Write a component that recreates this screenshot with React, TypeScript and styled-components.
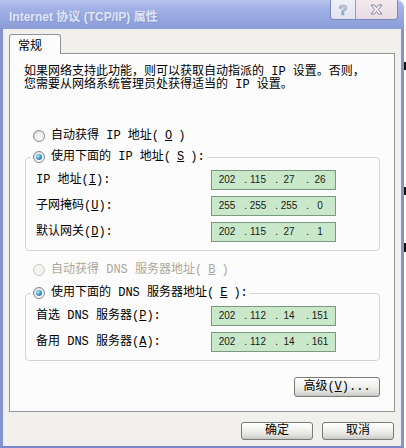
import React from "react";
import styled, { createGlobalStyle, css } from "styled-components";

const GlobalStyle = createGlobalStyle`
  html, body { margin: 0; padding: 0; background: #ffffff; }
  body {
    font-family: "Liberation Mono", "Noto Sans CJK SC", monospace;
    font-size: 12px;
    color: #000000;
  }
  #root { width: 406px; height: 448px; }
`;

const Page = styled.div`
  display: flex;
  width: 406px;
  height: 448px;
  overflow: hidden;
  background: #ffffff;
`;

const Window = styled.div`
  width: 404px;
  height: 448px;
  flex: none;
  display: flex;
  flex-direction: column;
`;

const TitleBar = styled.div`
  height: 29px;
  flex: none;
  display: flex;
  align-items: flex-start;
  justify-content: space-between;
  background: linear-gradient(180deg, #b9c5ee 0%, #a4b3e6 25%, #97a7df 60%, #8b9cd7 100%);
  border-top-right-radius: 7px;
`;

const Title = styled.div`
  padding: 10px 0 0 9px;
  font-family: "Liberation Sans", "Noto Sans CJK SC", sans-serif;
  font-weight: bold;
  font-size: 12px;
  line-height: 14px;
  color: #dfe4f6;
  text-shadow: 1px 1px 0 #8a98cc;
  white-space: nowrap;
`;

const CaptionButtons = styled.div`
  display: flex;
  height: 19px;
  margin-right: 6px;
  border: 1px solid #7c88ba;
  border-top: none;
  border-radius: 0 0 4px 4px;
  overflow: hidden;
`;

const CaptionButton = styled.div<{ $tone: "help" | "close" }>`
  width: ${(p) => (p.$tone === "close" ? 41 : 24)}px;
  display: flex;
  align-items: center;
  justify-content: center;
  background: ${(p) =>
    p.$tone === "close"
      ? "linear-gradient(180deg, #f3e9ee 0%, #e9dbe4 100%)"
      : "linear-gradient(180deg, #f0f1f8 0%, #e0e3ef 100%)"};
  & + & {
    border-left: 1px solid #939bc2;
  }
`;

const HelpGlyph = styled.span`
  font-family: "Liberation Sans", sans-serif;
  font-weight: bold;
  font-size: 14px;
  line-height: 14px;
  color: #f7f7fb;
  -webkit-text-stroke: 0.7px #7c8096;
`;

const Frame = styled.div`
  flex: 1;
  display: flex;
  flex-direction: column;
  border-left: 3px solid #8494d2;
  border-right: 3px solid #8494d2;
  border-bottom: 2px solid #7888ca;
  background: #f1f0ec;
  padding: 5px 6px 6px 6px;
`;

const TabStrip = styled.div`
  display: flex;
`;

const Tab = styled.div`
  position: relative;
  z-index: 1;
  width: 52px;
  height: 20px;
  margin-bottom: -1px;
  padding: 4px 0 0 8px;
  box-sizing: border-box;
  border: 1px solid #8e9698;
  border-bottom: none;
  border-radius: 3px 3px 0 0;
  background: #fcfcfd;
  line-height: 12px;
  font-family: "Noto Sans CJK SC", sans-serif;
`;

const Panel = styled.div`
  height: 359px;
  box-sizing: border-box;
  border: 1px solid #8e9698;
  background: #fcfcfd;
  display: flex;
  flex-direction: column;
`;

const Intro = styled.p`
  margin: 12px 0 0 14px;
  line-height: 13px;
  white-space: nowrap;
`;

const OptionLine = styled.div<{ $top: number }>`
  margin: ${(p) => p.$top}px 0 0 23px;
`;

const Option = styled.label<{ $disabled?: boolean }>`
  display: flex;
  align-items: center;
  gap: 6px;
  height: 14px;
  line-height: 14px;
  white-space: nowrap;
  color: ${(p) => (p.$disabled ? "#aca899" : "#000000")};
`;

const RadioDot = styled.span<{ $checked?: boolean; $disabled?: boolean }>`
  width: 12px;
  height: 12px;
  box-sizing: border-box;
  flex: none;
  border-radius: 50%;
  display: flex;
  align-items: center;
  justify-content: center;
  border: 1px solid ${(p) => (p.$disabled ? "#cbc9bd" : "#7f8b97")};
  background: ${(p) =>
    p.$disabled
      ? "#f4f4f0"
      : "radial-gradient(circle at 65% 70%, #ffffff 0%, #f3f3ef 40%, #d2d2ca 100%)"};
  ${(p) =>
    p.$checked &&
    css`
      &::after {
        content: "";
        width: 6px;
        height: 6px;
        border-radius: 50%;
        background: radial-gradient(circle at 35% 35%, #b4ecfb 0%, #43a0d8 45%, #1b4d8a 100%);
      }
    `}
`;

const Group = styled.fieldset<{ $top: number }>`
  margin: ${(p) => p.$top}px 14px 0 15px;
  padding: 6px 0 8px 10px;
  min-width: 0;
  border: 1px solid #d5d5cb;
  border-radius: 4px;
`;

const Legend = styled.legend`
  padding: 0 2px;
  margin-left: -5px;
  background: #fcfcfd;
`;

const Fields = styled.div`
  display: grid;
  grid-template-columns: 175px 125px;
  row-gap: 6px;
  align-items: center;
`;

const FieldLabel = styled.span`
  line-height: 14px;
  white-space: nowrap;
`;

const IpBox = styled.div`
  width: 125px;
  height: 20px;
  box-sizing: border-box;
  display: flex;
  align-items: center;
  padding-left: 4px;
  border: 1px solid #7b9881;
  background: #c9e8c9;
  font-family: "Liberation Sans", Arial, sans-serif;
  font-size: 10px;
  line-height: 12px;
  color: #1a1a1a;
`;

const Octet = styled.span`
  width: 22px;
  text-align: center;
`;

const Dot = styled.span`
  width: 9px;
  text-align: right;
`;

const ButtonRow = styled.div<{ $top: number; $right: number }>`
  display: flex;
  justify-content: flex-end;
  gap: 9px;
  margin: ${(p) => p.$top}px ${(p) => p.$right}px 0 0;
`;

const Button = styled.button<{ $w: number; $h: number }>`
  width: ${(p) => p.$w}px;
  height: ${(p) => p.$h}px;
  padding: 0;
  box-sizing: border-box;
  border: 1px solid #7a7a78;
  border-radius: 3px;
  background: linear-gradient(180deg, #ffffff 0%, #f4f4f2 35%, #e2e2de 75%, #c6c6c2 100%);
  font-family: "Liberation Mono", "Noto Sans CJK SC", monospace;
  font-size: 12px;
  line-height: 12px;
  color: #000000;
  display: flex;
  align-items: center;
  justify-content: center;
  white-space: nowrap;
`;

const Outside = styled.div`
  width: 2px;
  flex: none;
  display: flex;
  flex-direction: column;
`;

const Mark = styled.span<{ $top: number; $h: number }>`
  margin-top: ${(p) => p.$top}px;
  height: ${(p) => p.$h}px;
  width: 2px;
  background: #111111;
`;

const CloseIcon = () => (
  <svg width="13" height="11" viewBox="0 0 13 11">
    <path
      d="M1 1 H4.5 L6.5 3.6 L8.5 1 H12 L8.3 5.5 L12 10 H8.5 L6.5 7.4 L4.5 10 H1 L4.7 5.5 Z"
      fill="#f7f2f5"
      stroke="#84849a"
      strokeWidth="1"
      strokeLinejoin="round"
    />
  </svg>
);

const Ip = ({ value }: { value: string }) => {
  const parts = value.split(".");
  return (
    <IpBox>
      {parts.map((p, i) => (
        <React.Fragment key={i}>
          {i > 0 && <Dot>.</Dot>}
          <Octet>{p}</Octet>
        </React.Fragment>
      ))}
    </IpBox>
  );
};

export default function App() {
  return (
    <Page>
      <GlobalStyle />
      <Window>
        <TitleBar>
          <Title>Internet 协议 (TCP/IP) 属性</Title>
          <CaptionButtons>
            <CaptionButton $tone="help">
              <HelpGlyph>?</HelpGlyph>
            </CaptionButton>
            <CaptionButton $tone="close">
              <CloseIcon />
            </CaptionButton>
          </CaptionButtons>
        </TitleBar>
        <Frame>
          <TabStrip>
            <Tab>常规</Tab>
          </TabStrip>
          <Panel>
            <Intro>
              如果网络支持此功能，则可以获取自动指派的 IP 设置。否则，
              <br />
              您需要从网络系统管理员处获得适当的 IP 设置。
            </Intro>

            <OptionLine $top={37}>
              <Option>
                <RadioDot />
                自动获得 IP 地址(<u>O</u>)
              </Option>
            </OptionLine>

            <Group $top={7}>
              <Legend>
                <Option>
                  <RadioDot $checked />
                  使用下面的 IP 地址(<u>S</u>):
                </Option>
              </Legend>
              <Fields>
                <FieldLabel>
                  IP 地址(<u>I</u>):
                </FieldLabel>
                <Ip value="202.115.27.26" />
                <FieldLabel>
                  子网掩码(<u>U</u>):
                </FieldLabel>
                <Ip value="255.255.255.0" />
                <FieldLabel>
                  默认网关(<u>D</u>):
                </FieldLabel>
                <Ip value="202.115.27.1" />
              </Fields>
            </Group>

            <OptionLine $top={12}>
              <Option $disabled>
                <RadioDot $disabled />
                自动获得 DNS 服务器地址(<u>B</u>)
              </Option>
            </OptionLine>

            <Group $top={9}>
              <Legend>
                <Option>
                  <RadioDot $checked />
                  使用下面的 DNS 服务器地址(<u>E</u>):
                </Option>
              </Legend>
              <Fields>
                <FieldLabel>
                  首选 DNS 服务器(<u>P</u>):
                </FieldLabel>
                <Ip value="202.112.14.151" />
                <FieldLabel>
                  备用 DNS 服务器(<u>A</u>):
                </FieldLabel>
                <Ip value="202.112.14.161" />
              </Fields>
            </Group>

            <ButtonRow $top={16} $right={14}>
              <Button $w={86} $h={20}>
                高级(<u>V</u>)...
              </Button>
            </ButtonRow>
          </Panel>
          <ButtonRow $top={10} $right={1}>
            <Button $w={72} $h={18}>确定</Button>
            <Button $w={72} $h={18}>取消</Button>
          </ButtonRow>
        </Frame>
      </Window>
      <Outside>
        <Mark $top={62} $h={8} />
        <Mark $top={117} $h={8} />
        <Mark $top={48} $h={9} />
      </Outside>
    </Page>
  );
}
